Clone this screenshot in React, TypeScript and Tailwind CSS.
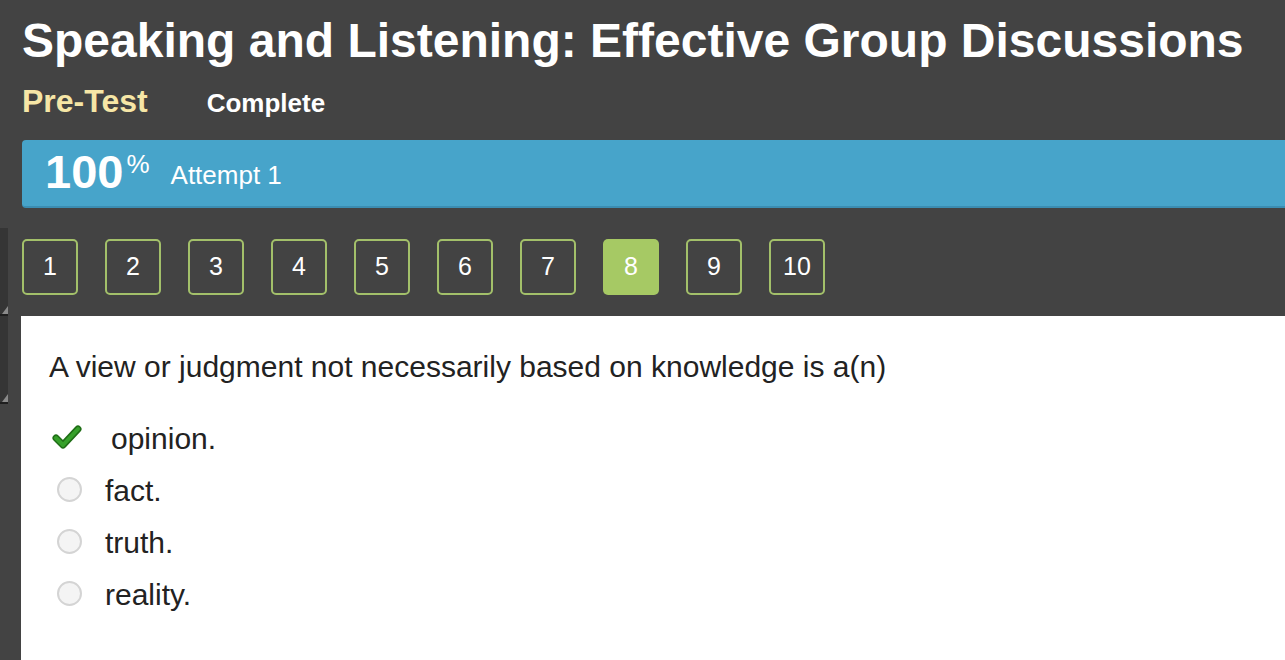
import React from "react";

const nums = [1, 2, 3, 4, 5, 6, 7, 8, 9, 10];

function Radio() {
  return <div className="w-[25px] h-[25px] rounded-full border-2 border-[#d4d4d4] bg-[#f4f4f4] shrink-0" />;
}

function Check() {
  return (
    <svg width="32" height="28" viewBox="0 0 32 28" className="shrink-0">
      <path d="M4 14 L11 21 L26 5" fill="none" stroke="#1f6e16" strokeWidth="7" strokeLinecap="round" strokeLinejoin="round" />
      <path d="M4 14 L11 21 L26 5" fill="none" stroke="#36a02a" strokeWidth="4" strokeLinecap="round" strokeLinejoin="round" />
    </svg>
  );
}

export default function App() {
  return (
    <div className="w-[1285px] h-[660px] overflow-hidden bg-[#434343] font-['Liberation_Sans',Arial,sans-serif]">
      <div className="pl-[22px]">
        <h1 className="pt-[17px] text-[48px] leading-[48px] font-bold text-white whitespace-nowrap">
          Speaking and Listening: Effective Group Discussions
        </h1>
        <div className="mt-[21px] flex items-baseline">
          <span className="text-[32px] leading-[30px] font-bold text-[#f6e6a6]">Pre-Test</span>
          <span className="ml-[59px] text-[26px] leading-[30px] font-bold text-white">Complete</span>
        </div>
        <div className="mt-[22px] h-[68px] rounded-l-[4px] bg-[#47a4ca] border-b-2 border-[#3b8db2] flex items-center pl-[23px]">
          <span className="text-[47px] leading-none font-bold text-white mt-[-4px]">100</span>
          <span className="text-[26px] leading-none text-white self-start mt-[11px] ml-[3px]">%</span>
          <span className="ml-[21px] text-[26px] leading-none text-white mt-[4px]">Attempt 1</span>
        </div>
      </div>
      <div className="flex">
        <div className="w-[21px] shrink-0 pt-[20px]">
          <div className="w-[8px] h-[88px] bg-[#353535] border-b-2 border-[#1e1e1e] flex items-end justify-end">
            <div className="w-0 h-0 border-l-[6px] border-l-transparent border-b-[8px] border-b-[#8a8a8a]" />
          </div>
          <div className="w-[8px] h-[88px] bg-[#353535] border-b-2 border-[#1e1e1e] flex items-end justify-end">
            <div className="w-0 h-0 border-l-[6px] border-l-transparent border-b-[8px] border-b-[#8a8a8a]" />
          </div>
        </div>
        <div className="flex-1">
          <div className="h-[108px] flex items-start pt-[31px] pl-[1px] gap-[27px]">
            {nums.map((n) =>
              n === 8 ? (
                <div key={n} className="w-[56px] h-[56px] rounded-[5px] bg-[#a6c964] flex items-center justify-center text-[25px] text-white">
                  {n}
                </div>
              ) : (
                <div key={n} className="w-[56px] h-[56px] rounded-[5px] border-2 border-[#a3c06a] flex items-center justify-center text-[25px] text-white">
                  {n}
                </div>
              )
            )}
          </div>
          <div className="h-[344px] bg-white pl-[28px] pt-[36px] text-[#222222]">
            <p className="text-[30px] leading-[30px] whitespace-nowrap">
              A view or judgment not necessarily based on knowledge is a(n)
            </p>
            <div className="mt-[31px]">
              <div className="h-[52px] flex items-center">
                <div className="ml-[3px] mt-[-2px]"><Check /></div>
                <span className="ml-[27px] text-[30px] leading-[30px]">opinion.</span>
              </div>
              <div className="h-[52px] flex items-center">
                <div className="ml-[8px] mt-[-4px]"><Radio /></div>
                <span className="ml-[23px] text-[30px] leading-[30px]">fact.</span>
              </div>
              <div className="h-[52px] flex items-center">
                <div className="ml-[8px] mt-[-4px]"><Radio /></div>
                <span className="ml-[23px] text-[30px] leading-[30px]">truth.</span>
              </div>
              <div className="h-[52px] flex items-center">
                <div className="ml-[8px] mt-[-4px]"><Radio /></div>
                <span className="ml-[23px] text-[30px] leading-[30px]">reality.</span>
              </div>
            </div>
          </div>
        </div>
      </div>
    </div>
  );
}
